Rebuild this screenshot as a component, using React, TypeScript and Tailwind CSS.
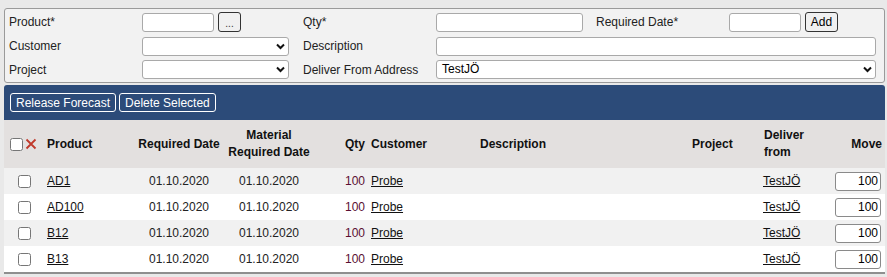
import React from "react";

const rows = ["AD1", "AD100", "B12", "B13"];

function Chevron() {
  return (
    <svg className="pointer-events-none absolute right-[4px] top-[6px]" width="9" height="7" viewBox="0 0 9 7">
      <path d="M1 1.5 L4.5 5 L8 1.5" fill="none" stroke="#111" strokeWidth="2" />
    </svg>
  );
}

function Select({ w, value }: { w: string; value?: string }) {
  return (
    <div className={`relative ${w} h-[19px]`}>
      <div className="h-full w-full rounded-[3px] border border-[#a9a9a9] bg-white pl-[5px] text-[12px] leading-[17px] text-black">
        {value}
      </div>
      <Chevron />
    </div>
  );
}

function Field({ w }: { w: string }) {
  return <input type="text" className={`${w} h-[19px] rounded-[3px] border border-[#a9a9a9] bg-white`} />;
}

function App() {
  return (
    <div className="min-h-[277px] bg-[#e9e9e9] pl-[4px] pr-[2px] pt-[8px] font-['Liberation_Sans',Arial,sans-serif] text-[12px] text-[#222]">
      {/* filter form */}
      <section className="rounded-[3px] border border-[#9a9a9a] bg-[#f2f2f2] pb-[1px] pl-[4px] pt-[1px]">
        <div className="flex h-[24px] items-center">
          <label className="w-[133px]">Product*</label>
          <div className="flex w-[161px] items-center gap-[4px]">
            <Field w="w-[72px]" />
            <button className="h-[20px] w-[23px] rounded-[3px] border border-[#333] bg-[#f0f0f0] pt-[3px] text-[10px] leading-[14px] text-[#333]">
              ...
            </button>
          </div>
          <label className="w-[133px]">Qty*</label>
          <Field w="w-[147px]" />
          <label className="ml-[13px] w-[133px]">Required Date*</label>
          <Field w="w-[72px]" />
          <button className="ml-[4px] h-[20px] w-[33px] rounded-[3px] border border-[#333] bg-[#f0f0f0] text-[12px] leading-[16px] text-black">
            Add
          </button>
        </div>
        <div className="flex h-[24px] items-center">
          <label className="w-[133px]">Customer</label>
          <div className="w-[161px]">
            <Select w="w-[147px]" />
          </div>
          <label className="w-[133px]">Description</label>
          <Field w="w-[440px]" />
        </div>
        <div className="flex h-[23px] items-center">
          <label className="w-[133px]">Project</label>
          <div className="w-[161px]">
            <Select w="w-[147px]" />
          </div>
          <label className="w-[133px]">Deliver From Address</label>
          <Select w="w-[440px]" value="TestJÖ" />
        </div>
      </section>

      {/* list */}
      <section className="mt-[2px] overflow-hidden border-b-2 border-[#8f8f8f]">
        <div className="flex h-[35px] items-start gap-[3px] rounded-t-[3px] bg-[#2c4b79] pl-[6px] pt-[8px]">
          <button className="h-[19px] rounded-[3px] border border-white px-[5px] text-[12px] leading-[16px] text-white">
            Release Forecast
          </button>
          <button className="h-[19px] rounded-[3px] border border-white px-[5px] text-[12px] leading-[16px] text-white">
            Delete Selected
          </button>
        </div>
        <table className="w-[881px] table-fixed border-collapse">
          <colgroup>
            <col className="w-[40px]" />
            <col className="w-[90px]" />
            <col className="w-[90px]" />
            <col className="w-[90px]" />
            <col className="w-[53px]" />
            <col className="w-[109px]" />
            <col className="w-[212px]" />
            <col className="w-[72px]" />
            <col className="w-[72px]" />
            <col className="w-[53px]" />
          </colgroup>
          <thead>
            <tr className="h-[48px] bg-[#e3e0df] text-[12px] font-bold text-[#111]">
              <th className="p-0">
                <div className="flex items-center pl-[6px]">
                  <input type="checkbox" className="m-0 h-[13px] w-[13px]" />
                  <svg className="ml-[2px]" width="12" height="12" viewBox="0 0 12 12">
                    <path d="M1.5 1.5 L10.5 10.5 M10.5 1.5 L1.5 10.5" stroke="#c0392b" strokeWidth="1.8" />
                  </svg>
                </div>
              </th>
              <th className="pl-[3px] text-left">Product</th>
              <th className="text-center">Required Date</th>
              <th className="text-center leading-[17px]">
                Material
                <br />
                Required Date
              </th>
              <th className="pr-[2px] text-right">Qty</th>
              <th className="pl-[4px] text-left">Customer</th>
              <th className="pl-[4px] text-left">Description</th>
              <th className="pl-[4px] text-left">Project</th>
              <th className="pl-[4px] text-left leading-[17px]">
                Deliver
                <br />
                from
              </th>
              <th className="pr-[3px] text-right">Move</th>
            </tr>
          </thead>
          <tbody>
            {rows.map((p, i) => (
              <tr key={p} className={`h-[26px] ${i % 2 === 0 ? "bg-[#f1f1f1]" : "bg-white"}`}>
                <td className="p-0 text-center">
                  <input type="checkbox" className="m-0 h-[13px] w-[13px] align-middle" />
                </td>
                <td className="pl-[3px]">
                  <a href="#" className="text-[#111] underline">{p}</a>
                </td>
                <td className="text-center text-[#222]">01.10.2020</td>
                <td className="text-center text-[#222]">01.10.2020</td>
                <td className="pr-[2px] text-right text-[#5a0f33]">100</td>
                <td className="pl-[4px]">
                  <a href="#" className="text-[#111] underline">Probe</a>
                </td>
                <td></td>
                <td></td>
                <td className="pl-[3px]">
                  <a href="#" className="text-[#111] underline">TestJÖ</a>
                </td>
                <td className="pr-[4px] text-right">
                  <input
                    type="text"
                    defaultValue="100"
                    className="h-[19px] w-[46px] rounded-[3px] border border-[#8a8a8a] bg-white pr-[2px] text-right text-[12px] text-black"
                  />
                </td>
              </tr>
            ))}
          </tbody>
        </table>
      </section>
    </div>
  );
}

export default App;
